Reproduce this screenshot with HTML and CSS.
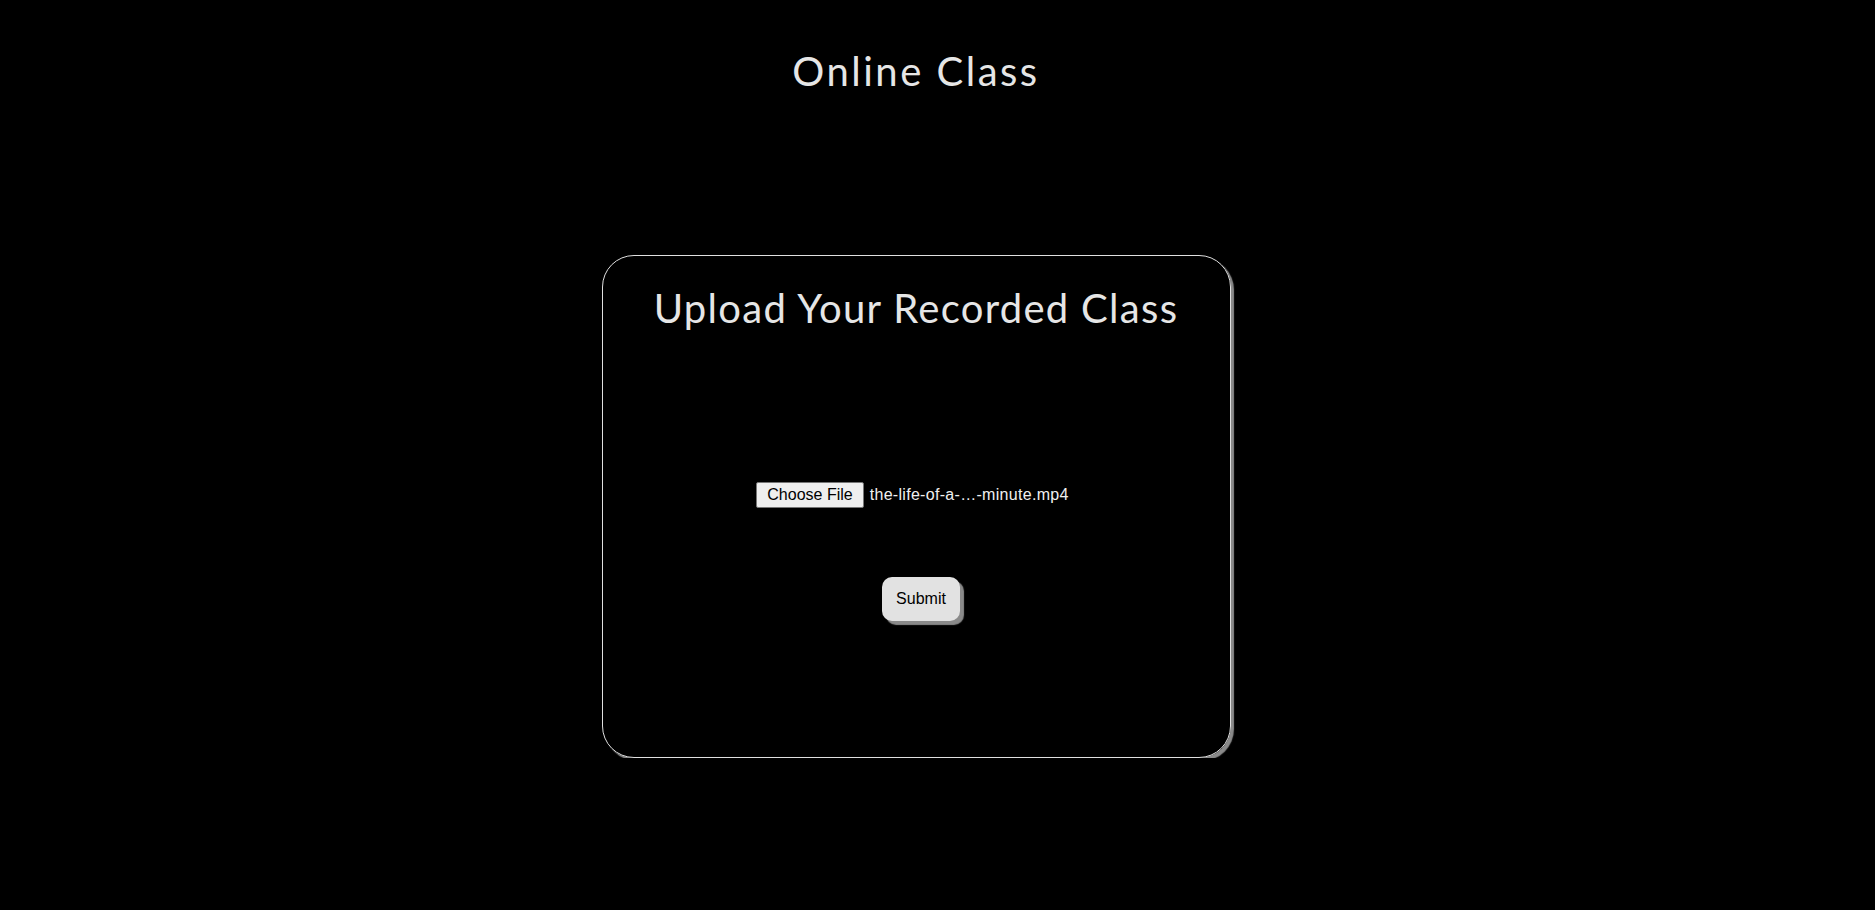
FILE: index.html
```html
<!DOCTYPE html>
<html lang="en">
<head>
<meta charset="utf-8">
<title>Online Class</title>
<link rel="stylesheet" href="styles.css">
</head>
<body>
<div class="page">
  <h1 class="title">Online Class</h1>
  <form class="card">
    <h2 class="card-title">Upload Your Recorded Class</h2>
    <div class="file-field">
      <span class="file-button">Choose File</span>
      <span class="file-name">the-life-of-a-…-minute.mp4</span>
    </div>
    <button type="button" class="submit">Submit</button>
  </form>
</div>
</body>
</html>
```

FILE: styles.css
```css
html, body {
  margin: 0;
  padding: 0;
  background: #000;
}

.page {
  width: 1832px;
  display: flex;
  flex-direction: column;
  align-items: center;
  font-family: "Lato", "Open Sans", sans-serif;
  color: #e6e6e6;
}

.title {
  margin: 47px 0 0;
  font-size: 40px;
  font-weight: 400;
  line-height: 48px;
  letter-spacing: 2.5px;
}

.card {
  box-sizing: border-box;
  margin-top: 160px;
  width: 629px;
  height: 503px;
  border: 1px solid #e0e0e0;
  border-radius: 32px;
  box-shadow: 3px 3px 1px #8a8a8a;
  display: flex;
  flex-direction: column;
  align-items: center;
}

.card-title {
  margin: 28px 0 0;
  font-size: 40px;
  font-weight: 400;
  line-height: 48px;
  letter-spacing: 1.3px;
}

.file-field {
  margin-top: 150px;
  margin-right: 7px;
  display: flex;
  align-items: center;
  font-family: "Liberation Sans", Arial, sans-serif;
  font-size: 16px;
}

.file-button {
  box-sizing: border-box;
  height: 26px;
  padding: 0 10px;
  display: flex;
  align-items: center;
  background: #efefef;
  color: #000;
  border: 1px solid #767676;
  border-radius: 2px;
  margin-right: 6px;
}

.file-name {
  color: #f0f0f0;
  letter-spacing: 0.3px;
}

.submit {
  margin-top: 69px;
  margin-left: 10px;
  padding: 13px 14px;
  font-family: "Liberation Sans", Arial, sans-serif;
  font-size: 16px;
  line-height: 18px;
  color: #000;
  background: #e2e2e2;
  border: none;
  border-radius: 10px;
  box-shadow: 4px 4px 1px #8a8a8a;
}
```
